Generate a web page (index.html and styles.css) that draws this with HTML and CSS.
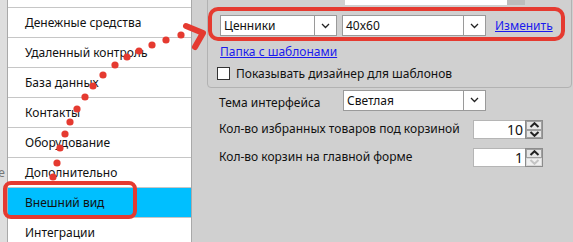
FILE: index.html
```html
<!DOCTYPE html>
<html lang="ru">
<head>
  <meta charset="UTF-8">
  <title>Настройки</title>
  <link rel="stylesheet" href="styles.css">
</head>
<body>
  <div class="nav-edge"><span class="edge-text">ое</span></div>

  <ul class="nav-list">
    <li class="nav-item nav-item-cut">Дисконт</li>
    <li class="nav-item">Денежные средства</li>
    <li class="nav-item">Удаленный контроль</li>
    <li class="nav-item">База данных</li>
    <li class="nav-item">Контакты</li>
    <li class="nav-item">Оборудование</li>
    <li class="nav-item">Дополнительно</li>
    <li class="nav-item active">Внешний вид</li>
    <li class="nav-item">Интеграции</li>
  </ul>

  <div class="settings">
    <div class="group-box">
      <div class="row row-cut">
        <span class="cut-label">Шаблон</span>
        <div class="cut-field"></div>
        <div class="cut-button"></div>
      </div>

      <div class="row">
        <div class="combo combo-type">
          <span class="combo-text">Ценники</span>
          <span class="combo-button">
            <svg width="9" height="6" viewBox="0 0 9 6"><path d="M1 1L4.5 4.5L8 1" fill="none" stroke="#222" stroke-width="1.3"/></svg>
          </span>
        </div>
        <div class="combo combo-size">
          <span class="combo-text">40x60</span>
          <span class="combo-button">
            <svg width="9" height="6" viewBox="0 0 9 6"><path d="M1 1L4.5 4.5L8 1" fill="none" stroke="#222" stroke-width="1.3"/></svg>
          </span>
        </div>
        <a class="link link-edit" href="#">Изменить</a>
      </div>

      <div class="row row-link">
        <a class="link" href="#">Папка с шаблонами</a>
      </div>

      <label class="row row-check">
        <span class="checkbox"></span>
        <span>Показывать дизайнер для шаблонов</span>
      </label>
    </div>

    <div class="option">
      <span class="option-label label-theme">Тема интерфейса</span>
      <div class="combo combo-theme">
        <span class="combo-text">Светлая</span>
        <span class="combo-button">
          <svg width="9" height="6" viewBox="0 0 9 6"><path d="M1 1L4.5 4.5L8 1" fill="none" stroke="#222" stroke-width="1.3"/></svg>
        </span>
      </div>
    </div>

    <div class="option option-num">
      <span class="option-label label-num">Кол-во избранных товаров под корзиной</span>
      <div class="spinner">
        <span class="spinner-value">10</span>
        <span class="spin-buttons">
          <span class="spin">
            <svg width="11" height="6" viewBox="0 0 11 6"><path d="M1.5 5L5.5 1.2L9.5 5" fill="none" stroke="#222" stroke-width="2"/></svg>
          </span>
          <span class="spin">
            <svg width="11" height="6" viewBox="0 0 11 6"><path d="M1.5 1L5.5 4.8L9.5 1" fill="none" stroke="#222" stroke-width="2"/></svg>
          </span>
        </span>
      </div>
    </div>

    <div class="option option-num">
      <span class="option-label label-num">Кол-во корзин на главной форме</span>
      <div class="spinner">
        <span class="spinner-value">1</span>
        <span class="spin-buttons">
          <span class="spin">
            <svg width="11" height="6" viewBox="0 0 11 6"><path d="M1.5 5L5.5 1.2L9.5 5" fill="none" stroke="#222" stroke-width="2"/></svg>
          </span>
          <span class="spin spin-disabled">
            <svg width="11" height="6" viewBox="0 0 11 6"><path d="M1.5 1L5.5 4.8L9.5 1" fill="none" stroke="#c4c4c4" stroke-width="2"/></svg>
          </span>
        </span>
      </div>
    </div>
  </div>

  <!-- annotation drawn over the screenshot -->
  <svg class="marks" width="573" height="242" viewBox="0 0 573 242">
    <g fill="#e53a30">
      <circle cx="53" cy="177" r="3.6"/>
      <circle cx="57" cy="163" r="3.6"/>
      <circle cx="60" cy="148" r="3.6"/>
      <circle cx="65" cy="134" r="3.6"/>
      <circle cx="70" cy="122" r="3.6"/>
      <circle cx="77" cy="109" r="3.6"/>
      <circle cx="85" cy="97" r="3.6"/>
      <circle cx="93" cy="86" r="3.6"/>
      <circle cx="103" cy="75" r="3.6"/>
      <circle cx="115" cy="65" r="3.6"/>
      <circle cx="127" cy="57" r="3.6"/>
      <circle cx="139" cy="51" r="3.6"/>
      <circle cx="152" cy="45" r="3.6"/>
      <circle cx="166" cy="40" r="3.6"/>
      <circle cx="181" cy="35" r="3.6"/>
    </g>
    <path d="M186 26L203 33L195 47" fill="none" stroke="#e53a30" stroke-width="6" stroke-linecap="round" stroke-linejoin="round"/>
    <rect x="210" y="9" width="353" height="30" rx="8" fill="none" stroke="#e53a30" stroke-width="4"/>
    <rect x="5" y="183" width="130" height="34" rx="6" fill="none" stroke="#e53a30" stroke-width="4"/>
  </svg>
</body>
</html>
```

FILE: styles.css
```css
body {
  margin: 0;
  width: 573px;
  height: 242px;
  overflow: hidden;
  position: relative;
  display: flex;
  background-color: #d0d0d0;
  font-family: "Noto Sans", "Open Sans", sans-serif;
  font-size: 12px;
  color: #111;
}

.nav-edge {
  width: 7px;
  flex-shrink: 0;
  background-color: #dedede;
  border-right: 1px solid #a9a9a9;
  position: relative;
  overflow: hidden;
}

.edge-text {
  position: absolute;
  left: -9px;
  top: 164px;
  color: #777;
}

.nav-list {
  list-style: none;
  margin: 0;
  padding: 0;
  width: 183px;
  flex-shrink: 0;
  background-color: #fff;
  border-right: 1px solid #a9a9a9;
}

.nav-item {
  height: 29px;
  line-height: 29px;
  padding-left: 17px;
  border-bottom: 1px solid #c6c6c6;
  white-space: nowrap;
}

.nav-item-cut {
  margin-top: -22px;
}

.nav-item.active {
  background-color: #00bfff;
}

.settings {
  flex: 1;
  display: flex;
  flex-direction: column;
}

.group-box {
  margin: -30px 1px 0 15px;
  padding: 13px 0 7px 12px;
  border: 1px solid #b2b2b2;
  border-radius: 4px;
  display: flex;
  flex-direction: column;
}

.row {
  display: flex;
  align-items: center;
}

.row-cut {
  height: 21px;
  margin-bottom: 10px;
}

.cut-label {
  width: 123px;
  padding-left: 2px;
}

.cut-field {
  width: 162px;
  height: 21px;
  background-color: #fff;
}

.cut-button {
  width: 18px;
  height: 21px;
  background-color: #bcbcbc;
}

.combo {
  height: 21px;
  box-sizing: border-box;
  display: flex;
  background-color: #fff;
  border: 1px solid #9a9a9a;
}

.combo-text {
  flex: 1;
  line-height: 19px;
  padding-left: 3px;
}

.combo-button {
  width: 21px;
  border-left: 1px solid #9a9a9a;
  display: flex;
  align-items: center;
  justify-content: center;
}

.combo-type {
  width: 117px;
}

.combo-size {
  width: 144px;
  margin-left: 5px;
}

.combo-theme {
  width: 143px;
}

.link {
  color: #1a1aee;
  text-decoration: underline;
}

.link-edit {
  margin-left: 9px;
}

.row-link {
  margin-top: 8px;
  height: 14px;
}

.row-check {
  margin-top: 9px;
  height: 13px;
  gap: 6px;
  margin-left: -3px;
}

.checkbox {
  width: 11px;
  height: 11px;
  background-color: #fff;
  border: 1px solid #333;
}

.option {
  display: flex;
  align-items: center;
  margin-left: 27px;
  margin-top: 1px;
  height: 22px;
}

.option-num {
  margin-top: 9px;
  height: 19px;
}

.option-label {
  padding-top: 4px;
}

.option-num .option-label {
  padding-top: 0;
  margin-top: -2px;
}

.label-theme {
  width: 124px;
}

.label-num {
  width: 254px;
}

.spinner {
  display: flex;
  height: 19px;
}

.spinner-value {
  width: 52px;
  box-sizing: border-box;
  background-color: #fff;
  border: 1px solid #b5b5b5;
  border-right: none;
  text-align: right;
  padding-right: 2px;
  font-size: 14px;
  line-height: 17px;
}

.spin-buttons {
  width: 18px;
  display: flex;
  flex-direction: column;
  border: 1px solid #8c8c8c;
  box-sizing: border-box;
  background-color: #e6e6e6;
}

.spin {
  flex: 1;
  display: flex;
  align-items: center;
  justify-content: center;
  border: 1px solid #a0a0a0;
}

.spin-disabled {
  border-color: #dadada;
  background-color: #f0f0f0;
}

.marks {
  position: absolute;
  left: 0;
  top: 0;
  pointer-events: none;
}
```
